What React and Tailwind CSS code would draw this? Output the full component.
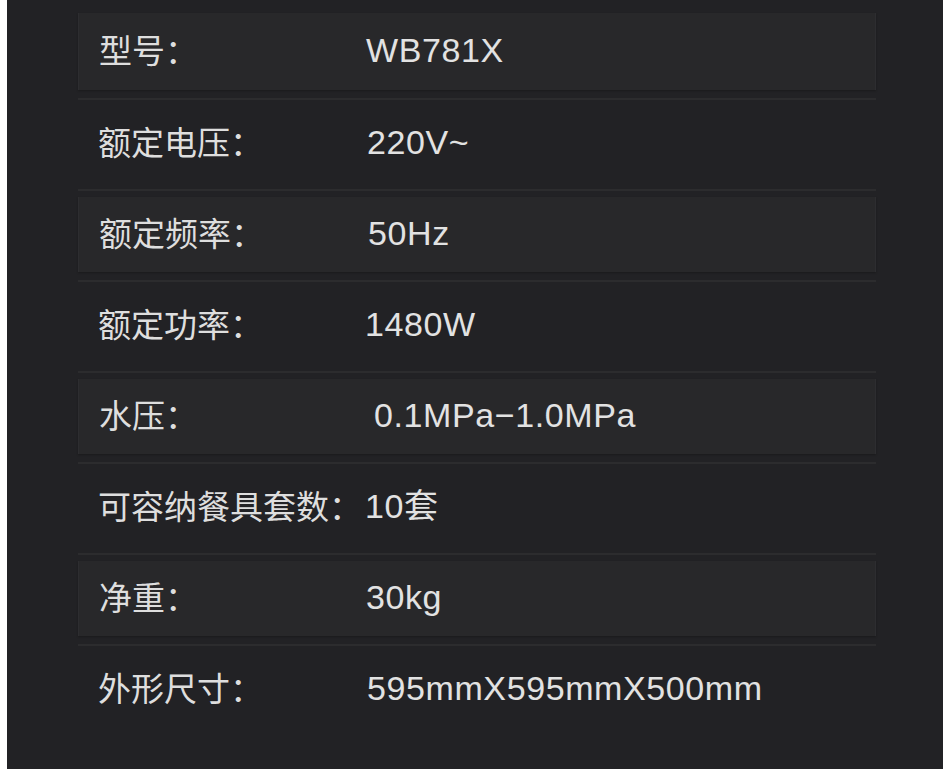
const specs = [
  { label: "型号：", value: "WB781X", band: true, shift: "" },
  { label: "额定电压：", value: "220V~", band: false, shift: "ml-[2px]" },
  { label: "额定频率：", value: "50Hz", band: true, shift: "ml-[2px]" },
  { label: "额定功率：", value: "1480W", band: false, shift: "" },
  { label: "水压：", value: "0.1MPa−1.0MPa", band: true, shift: "ml-[8px]" },
  { label: "可容纳餐具套数：", value: "10套", band: false, shift: "" },
  { label: "净重：", value: "30kg", band: true, shift: "" },
  { label: "外形尺寸：", value: "595mmX595mmX500mm", band: false, shift: "ml-[2px]" },
];

const SpecRow = ({ spec, first }) => (
  <div
    className={`h-[91px] flex flex-col ${
      first ? "" : "border-t-2 border-[#2c2c2e]"
    }`}
  >
    <div
      className={`flex-1 mt-[6px] mb-[8px] pb-[4px] flex items-center pl-[20px] ${
        spec.band
          ? "bg-[#28282a] border-x border-[#2d2d30] shadow-[0_1px_2px_rgba(0,0,0,0.25)]"
          : ""
      }`}
    >
      <span
        className="w-[267px] shrink-0 whitespace-nowrap text-[33px] leading-none text-[#dedede]"
        style={{ fontFamily: '"Noto Sans CJK SC", sans-serif' }}
      >
        {spec.label}
      </span>
      <span
        className={`whitespace-nowrap text-[34px] leading-none tracking-[0.6px] text-[#e2e2e2] ${spec.shift}`}
        style={{ fontFamily: '"Liberation Sans", "Noto Sans CJK SC", sans-serif' }}
      >
        {spec.value}
      </span>
    </div>
  </div>
);

export default function App() {
  return (
    <div className="w-[943px] h-[769px] bg-white flex overflow-hidden">
      <div className="ml-[7px] flex-1 bg-[#222225] pt-[7px]">
        <div className="ml-[71px] w-[798px] flex flex-col">
          {specs.map((s, i) => (
            <SpecRow key={s.label} spec={s} first={i === 0} />
          ))}
        </div>
      </div>
    </div>
  );
}
